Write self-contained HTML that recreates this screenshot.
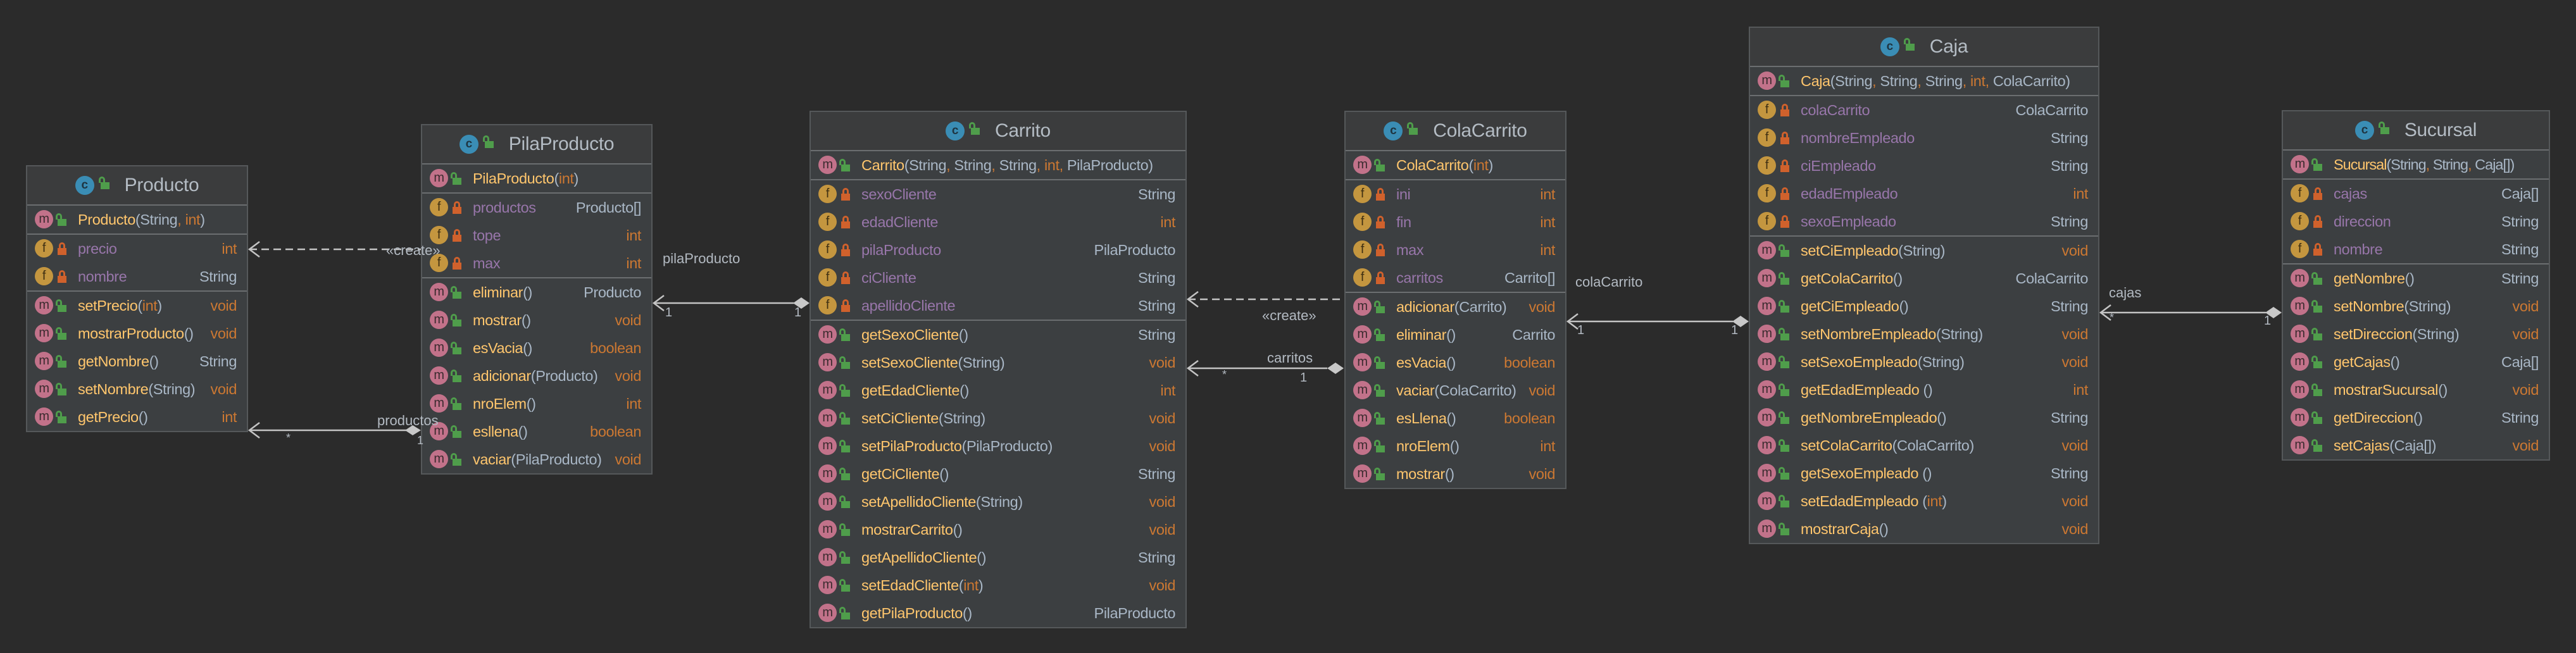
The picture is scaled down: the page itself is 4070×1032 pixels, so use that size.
<!DOCTYPE html>
<html><head><meta charset="utf-8"><style>
*{margin:0;padding:0;box-sizing:border-box}
body{width:4070px;height:1032px;background:#2b2b2b;position:relative;overflow:hidden;font-family:"Liberation Sans",sans-serif}
.b{position:absolute;background:#3c3f41;border:2px solid #55585a}
.h{height:60px;background:#3b3c3d;display:flex;align-items:center;justify-content:center;font-size:30px;color:#b4bcc4;letter-spacing:-0.3px}
.h .c{width:30px;height:30px;border-radius:50%;background:#3a8db5;color:#1e3440;font-size:19px;font-weight:bold;display:inline-flex;align-items:center;justify-content:center;margin-right:10px}
.h .lg{position:relative;left:auto;top:-4px;margin-right:24px}
.s{height:2px;background:#6b6e70}
.r{height:44px;position:relative;display:flex;align-items:center;padding-left:80px;padding-right:16px;font-size:23.5px;letter-spacing:-0.4px;white-space:nowrap;color:#a9b7c6}
.i{position:absolute;left:12px;top:7px;width:29px;height:29px;border-radius:50%;display:flex;align-items:center;justify-content:center;font-size:20px;color:#3a2a2e;font-style:normal}
.im{background:#c2728a}
.if{background:#c4963f;color:#3d2e12}
.lg,.lr{position:absolute;left:48px;top:12px;width:14px;height:20px;display:inline-block}
.lg::after,.lr::after{content:"";position:absolute;left:0;bottom:0;width:14px;height:11px;background:#4f9d4b}
.lg::before{content:"";position:absolute;left:-3px;top:0;width:4px;height:7px;border:3px solid #4f9d4b;border-bottom:none;border-radius:5px 5px 0 0}
.lr::after{background:#d0612c}
.lr::before{content:"";position:absolute;left:2px;top:0;width:4px;height:7px;border:3px solid #d0612c;border-bottom:none;border-radius:5px 5px 0 0}
.y{color:#ffc66d}.p{color:#9876aa}.o{color:#cc7832}.g{color:#a9b7c6}
.t{margin-left:auto;padding-left:10px}
svg{position:absolute;left:0;top:0}
</style></head><body>

<div class="b" style="left:41px;top:261px;width:351px">
<div class="h"><span class="c">c</span><span class="lg"></span>Producto</div>
<div class="s"></div>
<div class="r"><i class="i im">m</i><b class="lg"></b><span class="y">Producto</span>(String<span class="o">,</span>&nbsp;<span class="o">int</span>)</div>
<div class="s"></div>
<div class="r"><i class="i if">f</i><b class="lr"></b><span class="p">precio</span><span class="t o">int</span></div>
<div class="r"><i class="i if">f</i><b class="lr"></b><span class="p">nombre</span><span class="t">String</span></div>
<div class="s"></div>
<div class="r"><i class="i im">m</i><b class="lg"></b><span class="y">setPrecio</span>(<span class="o">int</span>)<span class="t o">void</span></div>
<div class="r"><i class="i im">m</i><b class="lg"></b><span class="y">mostrarProducto</span>()<span class="t o">void</span></div>
<div class="r"><i class="i im">m</i><b class="lg"></b><span class="y">getNombre</span>()<span class="t">String</span></div>
<div class="r"><i class="i im">m</i><b class="lg"></b><span class="y">setNombre</span>(String)<span class="t o">void</span></div>
<div class="r"><i class="i im">m</i><b class="lg"></b><span class="y">getPrecio</span>()<span class="t o">int</span></div>
</div>

<div class="b" style="left:665px;top:196px;width:366px">
<div class="h"><span class="c">c</span><span class="lg"></span>PilaProducto</div>
<div class="s"></div>
<div class="r"><i class="i im">m</i><b class="lg"></b><span class="y">PilaProducto</span>(<span class="o">int</span>)</div>
<div class="s"></div>
<div class="r"><i class="i if">f</i><b class="lr"></b><span class="p">productos</span><span class="t">Producto[]</span></div>
<div class="r"><i class="i if">f</i><b class="lr"></b><span class="p">tope</span><span class="t o">int</span></div>
<div class="r"><i class="i if">f</i><b class="lr"></b><span class="p">max</span><span class="t o">int</span></div>
<div class="s"></div>
<div class="r"><i class="i im">m</i><b class="lg"></b><span class="y">eliminar</span>()<span class="t">Producto</span></div>
<div class="r"><i class="i im">m</i><b class="lg"></b><span class="y">mostrar</span>()<span class="t o">void</span></div>
<div class="r"><i class="i im">m</i><b class="lg"></b><span class="y">esVacia</span>()<span class="t o">boolean</span></div>
<div class="r"><i class="i im">m</i><b class="lg"></b><span class="y">adicionar</span>(Producto)<span class="t o">void</span></div>
<div class="r"><i class="i im">m</i><b class="lg"></b><span class="y">nroElem</span>()<span class="t o">int</span></div>
<div class="r"><i class="i im">m</i><b class="lg"></b><span class="y">esllena</span>()<span class="t o">boolean</span></div>
<div class="r"><i class="i im">m</i><b class="lg"></b><span class="y">vaciar</span>(PilaProducto)<span class="t o">void</span></div>
</div>

<div class="b" style="left:1279px;top:175px;width:596px">
<div class="h"><span class="c">c</span><span class="lg"></span>Carrito</div>
<div class="s"></div>
<div class="r"><i class="i im">m</i><b class="lg"></b><span class="y">Carrito</span>(String<span class="o">,</span>&nbsp;String<span class="o">,</span>&nbsp;String<span class="o">,</span>&nbsp;<span class="o">int,</span>&nbsp;PilaProducto)</div>
<div class="s"></div>
<div class="r"><i class="i if">f</i><b class="lr"></b><span class="p">sexoCliente</span><span class="t">String</span></div>
<div class="r"><i class="i if">f</i><b class="lr"></b><span class="p">edadCliente</span><span class="t o">int</span></div>
<div class="r"><i class="i if">f</i><b class="lr"></b><span class="p">pilaProducto</span><span class="t">PilaProducto</span></div>
<div class="r"><i class="i if">f</i><b class="lr"></b><span class="p">ciCliente</span><span class="t">String</span></div>
<div class="r"><i class="i if">f</i><b class="lr"></b><span class="p">apellidoCliente</span><span class="t">String</span></div>
<div class="s"></div>
<div class="r"><i class="i im">m</i><b class="lg"></b><span class="y">getSexoCliente</span>()<span class="t">String</span></div>
<div class="r"><i class="i im">m</i><b class="lg"></b><span class="y">setSexoCliente</span>(String)<span class="t o">void</span></div>
<div class="r"><i class="i im">m</i><b class="lg"></b><span class="y">getEdadCliente</span>()<span class="t o">int</span></div>
<div class="r"><i class="i im">m</i><b class="lg"></b><span class="y">setCiCliente</span>(String)<span class="t o">void</span></div>
<div class="r"><i class="i im">m</i><b class="lg"></b><span class="y">setPilaProducto</span>(PilaProducto)<span class="t o">void</span></div>
<div class="r"><i class="i im">m</i><b class="lg"></b><span class="y">getCiCliente</span>()<span class="t">String</span></div>
<div class="r"><i class="i im">m</i><b class="lg"></b><span class="y">setApellidoCliente</span>(String)<span class="t o">void</span></div>
<div class="r"><i class="i im">m</i><b class="lg"></b><span class="y">mostrarCarrito</span>()<span class="t o">void</span></div>
<div class="r"><i class="i im">m</i><b class="lg"></b><span class="y">getApellidoCliente</span>()<span class="t">String</span></div>
<div class="r"><i class="i im">m</i><b class="lg"></b><span class="y">setEdadCliente</span>(<span class="o">int</span>)<span class="t o">void</span></div>
<div class="r"><i class="i im">m</i><b class="lg"></b><span class="y">getPilaProducto</span>()<span class="t">PilaProducto</span></div>
</div>

<div class="b" style="left:2124px;top:175px;width:351px">
<div class="h"><span class="c">c</span><span class="lg"></span>ColaCarrito</div>
<div class="s"></div>
<div class="r"><i class="i im">m</i><b class="lg"></b><span class="y">ColaCarrito</span>(<span class="o">int</span>)</div>
<div class="s"></div>
<div class="r"><i class="i if">f</i><b class="lr"></b><span class="p">ini</span><span class="t o">int</span></div>
<div class="r"><i class="i if">f</i><b class="lr"></b><span class="p">fin</span><span class="t o">int</span></div>
<div class="r"><i class="i if">f</i><b class="lr"></b><span class="p">max</span><span class="t o">int</span></div>
<div class="r"><i class="i if">f</i><b class="lr"></b><span class="p">carritos</span><span class="t">Carrito[]</span></div>
<div class="s"></div>
<div class="r"><i class="i im">m</i><b class="lg"></b><span class="y">adicionar</span>(Carrito)<span class="t o">void</span></div>
<div class="r"><i class="i im">m</i><b class="lg"></b><span class="y">eliminar</span>()<span class="t">Carrito</span></div>
<div class="r"><i class="i im">m</i><b class="lg"></b><span class="y">esVacia</span>()<span class="t o">boolean</span></div>
<div class="r"><i class="i im">m</i><b class="lg"></b><span class="y">vaciar</span>(ColaCarrito)<span class="t o">void</span></div>
<div class="r"><i class="i im">m</i><b class="lg"></b><span class="y">esLlena</span>()<span class="t o">boolean</span></div>
<div class="r"><i class="i im">m</i><b class="lg"></b><span class="y">nroElem</span>()<span class="t o">int</span></div>
<div class="r"><i class="i im">m</i><b class="lg"></b><span class="y">mostrar</span>()<span class="t o">void</span></div>
</div>

<div class="b" style="left:2763px;top:42px;width:554px">
<div class="h"><span class="c">c</span><span class="lg"></span>Caja</div>
<div class="s"></div>
<div class="r"><i class="i im">m</i><b class="lg"></b><span class="y">Caja</span>(String<span class="o">,</span>&nbsp;String<span class="o">,</span>&nbsp;String<span class="o">,</span>&nbsp;<span class="o">int,</span>&nbsp;ColaCarrito)</div>
<div class="s"></div>
<div class="r"><i class="i if">f</i><b class="lr"></b><span class="p">colaCarrito</span><span class="t">ColaCarrito</span></div>
<div class="r"><i class="i if">f</i><b class="lr"></b><span class="p">nombreEmpleado</span><span class="t">String</span></div>
<div class="r"><i class="i if">f</i><b class="lr"></b><span class="p">ciEmpleado</span><span class="t">String</span></div>
<div class="r"><i class="i if">f</i><b class="lr"></b><span class="p">edadEmpleado</span><span class="t o">int</span></div>
<div class="r"><i class="i if">f</i><b class="lr"></b><span class="p">sexoEmpleado</span><span class="t">String</span></div>
<div class="s"></div>
<div class="r"><i class="i im">m</i><b class="lg"></b><span class="y">setCiEmpleado</span>(String)<span class="t o">void</span></div>
<div class="r"><i class="i im">m</i><b class="lg"></b><span class="y">getColaCarrito</span>()<span class="t">ColaCarrito</span></div>
<div class="r"><i class="i im">m</i><b class="lg"></b><span class="y">getCiEmpleado</span>()<span class="t">String</span></div>
<div class="r"><i class="i im">m</i><b class="lg"></b><span class="y">setNombreEmpleado</span>(String)<span class="t o">void</span></div>
<div class="r"><i class="i im">m</i><b class="lg"></b><span class="y">setSexoEmpleado</span>(String)<span class="t o">void</span></div>
<div class="r"><i class="i im">m</i><b class="lg"></b><span class="y">getEdadEmpleado</span>&nbsp;()<span class="t o">int</span></div>
<div class="r"><i class="i im">m</i><b class="lg"></b><span class="y">getNombreEmpleado</span>()<span class="t">String</span></div>
<div class="r"><i class="i im">m</i><b class="lg"></b><span class="y">setColaCarrito</span>(ColaCarrito)<span class="t o">void</span></div>
<div class="r"><i class="i im">m</i><b class="lg"></b><span class="y">getSexoEmpleado</span>&nbsp;()<span class="t">String</span></div>
<div class="r"><i class="i im">m</i><b class="lg"></b><span class="y">setEdadEmpleado</span>&nbsp;(<span class="o">int</span>)<span class="t o">void</span></div>
<div class="r"><i class="i im">m</i><b class="lg"></b><span class="y">mostrarCaja</span>()<span class="t o">void</span></div>
</div>

<div class="b" style="left:3605px;top:174px;width:424px">
<div class="h"><span class="c">c</span><span class="lg"></span>Sucursal</div>
<div class="s"></div>
<div class="r" style="letter-spacing:-1px"><i class="i im">m</i><b class="lg"></b><span class="y">Sucursal</span>(String<span class="o">,</span>&nbsp;String<span class="o">,</span>&nbsp;Caja[])</div>
<div class="s"></div>
<div class="r"><i class="i if">f</i><b class="lr"></b><span class="p">cajas</span><span class="t">Caja[]</span></div>
<div class="r"><i class="i if">f</i><b class="lr"></b><span class="p">direccion</span><span class="t">String</span></div>
<div class="r"><i class="i if">f</i><b class="lr"></b><span class="p">nombre</span><span class="t">String</span></div>
<div class="s"></div>
<div class="r"><i class="i im">m</i><b class="lg"></b><span class="y">getNombre</span>()<span class="t">String</span></div>
<div class="r"><i class="i im">m</i><b class="lg"></b><span class="y">setNombre</span>(String)<span class="t o">void</span></div>
<div class="r"><i class="i im">m</i><b class="lg"></b><span class="y">setDireccion</span>(String)<span class="t o">void</span></div>
<div class="r"><i class="i im">m</i><b class="lg"></b><span class="y">getCajas</span>()<span class="t">Caja[]</span></div>
<div class="r"><i class="i im">m</i><b class="lg"></b><span class="y">mostrarSucursal</span>()<span class="t o">void</span></div>
<div class="r"><i class="i im">m</i><b class="lg"></b><span class="y">getDireccion</span>()<span class="t">String</span></div>
<div class="r"><i class="i im">m</i><b class="lg"></b><span class="y">setCajas</span>(Caja[])<span class="t o">void</span></div>
</div>

<svg width="4070" height="1032" viewBox="0 0 4070 1032" font-family="Liberation Sans, sans-serif" font-size="22" fill="#b3bac2">
<g stroke="#c4c4c4" stroke-width="2.5" fill="none">
<line x1="394" y1="394" x2="665" y2="394" stroke-dasharray="12 7"/>
<polyline points="410,382 394,394 410,406"/>
<line x1="394" y1="680" x2="642" y2="680"/>
<polyline points="410,668 394,680 410,692"/>
<line x1="1033" y1="479" x2="1254" y2="479"/>
<polyline points="1049,467 1033,479 1049,491"/>
<line x1="1877" y1="473" x2="2124" y2="473" stroke-dasharray="12 7"/>
<polyline points="1893,461 1877,473 1893,485"/>
<line x1="1877" y1="582" x2="2097" y2="582"/>
<polyline points="1893,570 1877,582 1893,594"/>
<line x1="2477" y1="508" x2="2738" y2="508"/>
<polyline points="2493,496 2477,508 2493,520"/>
<line x1="3319" y1="494" x2="3580" y2="494"/>
<polyline points="3335,482 3319,494 3335,506"/>
</g>
<g fill="#c8c8c8">
<polygon points="640,680 652,672 665,680 652,688"/>
<polygon points="1253,479 1266,470 1279,479 1266,488"/>
<polygon points="2097,582 2110,573 2123,582 2110,591"/>
<polygon points="2737,508 2750,499 2763,508 2750,517"/>
<polygon points="3579,494 3592,485 3605,494 3592,503"/>
</g>
<text x="610" y="403">«create»</text>
<text x="596" y="672">productos</text>
<text x="452" y="698" font-size="18">*</text>
<text x="659" y="702" font-size="18">1</text>
<text x="1047" y="416">pilaProducto</text>
<text x="1051" y="500" font-size="20">1</text>
<text x="1255" y="500" font-size="20">1</text>
<text x="1994" y="506">«create»</text>
<text x="2002" y="573">carritos</text>
<text x="1931" y="598" font-size="18">*</text>
<text x="2054" y="603" font-size="20">1</text>
<text x="2489" y="453">colaCarrito</text>
<text x="2492" y="528" font-size="20">1</text>
<text x="2735" y="528" font-size="20">1</text>
<text x="3332" y="470">cajas</text>
<text x="3333" y="508" font-size="18">*</text>
<text x="3577" y="513" font-size="20">1</text>
</svg>
</body></html>
